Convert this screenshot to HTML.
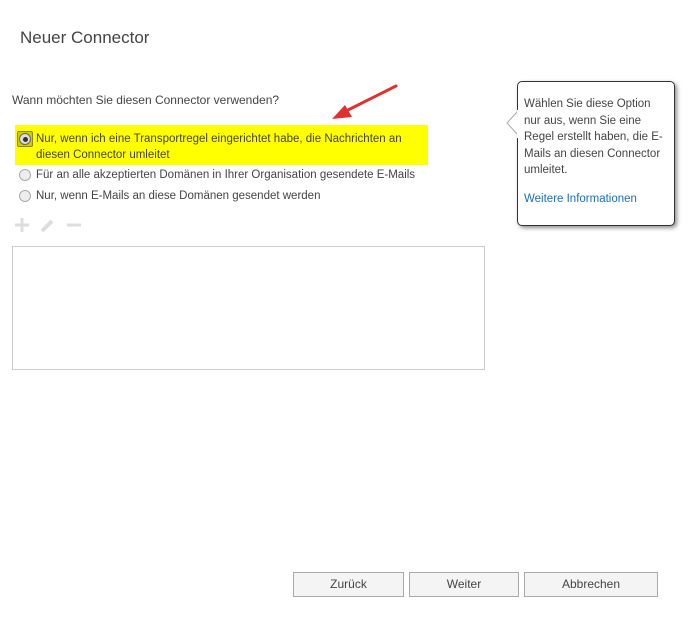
<!DOCTYPE html>
<html><head><meta charset="utf-8"><style>
body{margin:0;width:690px;height:629px;background:#fff;font-family:"Liberation Sans",sans-serif;color:#444;position:relative;overflow:hidden}
.a{position:absolute;white-space:nowrap}
.t{font-size:11.5px}
.r{position:absolute;width:10px;height:10px;border:1px solid #aaa;border-radius:50%;background:#eee}
.btn{position:absolute;top:572px;height:23px;border:1px solid #aaa;background:#f4f4f4;font-size:12px;text-align:center;line-height:23px;color:#444}
</style></head><body>
<div class="a" style="left:20px;top:28px;font-size:17px;color:#444">Neuer Connector</div>
<div class="a t" style="left:12px;top:93px;font-size:12px">Wann möchten Sie diesen Connector verwenden?</div>
<div class="a" style="left:15px;top:125px;width:413px;height:40px;background:#ffff00"></div>
<div class="a" style="left:17px;top:131px;width:14px;height:14px;border:1px solid #8a8a00;background:#cccc00;border-radius:2px"></div>
<div class="r" style="left:19px;top:133px;background:#ddd;border-color:#666"></div>
<div class="a" style="left:22.5px;top:136.5px;width:5px;height:5px;border-radius:50%;background:#333"></div>
<div class="a t" style="left:36px;top:131px;line-height:16px;color:#444">Nur, wenn ich eine Transportregel eingerichtet habe, die Nachrichten an<br>diesen Connector umleitet</div>
<div class="r" style="left:19px;top:169px"></div>
<div class="a t" style="left:36px;top:169px">Für an alle akzeptierten Domänen in Ihrer Organisation gesendete E-Mails</div>
<div class="r" style="left:19px;top:190px"></div>
<div class="a t" style="left:36px;top:190px">Nur, wenn E-Mails an diese Domänen gesendet werden</div>
<svg class="a" style="left:14px;top:217px" width="70" height="16"><g stroke="#ddd" stroke-width="3" fill="none"><path d="M1 8h14M8 1v14M53 8h14"/><path d="M28 14l10-10" stroke-width="4"/></g></svg>
<div class="a" style="left:12px;top:246px;width:471px;height:122px;border:1px solid #ccc"></div>
<svg class="a" style="left:320px;top:80px" width="85" height="45"><path d="M76 6L20 34" stroke="#e03030" stroke-width="3" stroke-linecap="round"/><path d="M12 39l20-2-7-12z" fill="#e03030"/></svg>
<div class="a" style="left:517px;top:81px;width:156px;height:143px;border:1px solid #333;border-radius:5px;box-shadow:2px 2px 4px rgba(0,0,0,.45);background:#fff"></div>
<svg class="a" style="left:505px;top:110px" width="14" height="28"><path d="M13 1L2 13l11 12" fill="#fff" stroke="#aaa"/><path d="M13 0v28" stroke="#fff" stroke-width="2"/></svg>
<div class="a t" style="left:524px;top:96px;line-height:16.5px;color:#444">Wählen Sie diese Option<br>nur aus, wenn Sie eine<br>Regel erstellt haben, die E-<br>Mails an diesen Connector<br>umleitet.</div>
<div class="a t" style="left:524px;top:193px;color:#1a6ec0">Weitere Informationen</div>
<div class="btn" style="left:293px;width:109px">Zurück</div>
<div class="btn" style="left:409px;width:108px">Weiter</div>
<div class="btn" style="left:524px;width:132px">Abbrechen</div>
</body></html>
